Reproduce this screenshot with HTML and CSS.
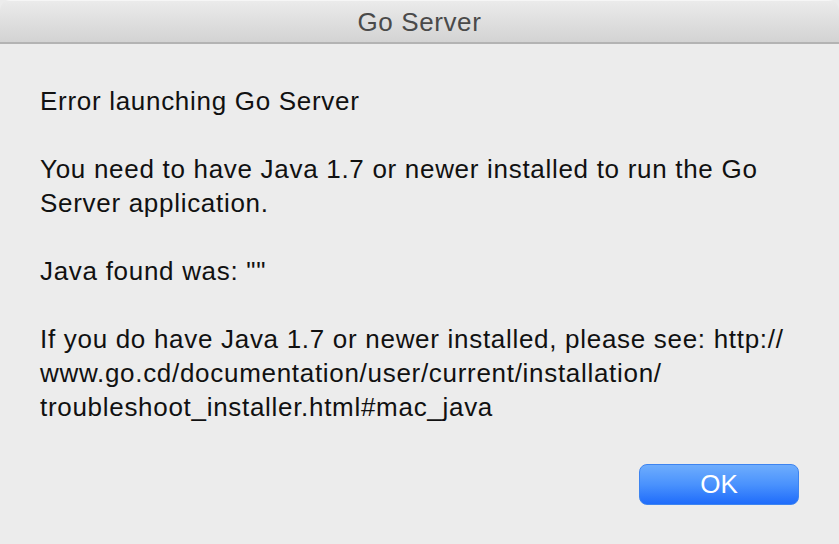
FILE: index.html
```html
<!DOCTYPE html>
<html lang="en">
<head>
  <meta charset="UTF-8" />
  <title>Go Server</title>
  <link rel="stylesheet" href="styles.css">
</head>
<body>
  <div class="window">
    <div class="titlebar">Go Server</div>
    <div class="content">
      <p>Error launching Go Server</p>
      <p>You need to have Java 1.7 or newer installed to run the Go Server application.</p>
      <p>Java found was: ""</p>
      <p>If you do have Java 1.7 or newer installed, please see: http://<br>www.go.cd/documentation/user/current/installation/<br>troubleshoot_installer.html#mac_java</p>
    </div>
    <div class="actions">
      <button type="button" class="btn-ok">OK</button>
    </div>
  </div>
</body>
</html>
```

FILE: styles.css
```css
html, body {
  margin: 0;
  padding: 0;
  background: #ececec;
}
body {
  font-family: "Liberation Sans", Arial, sans-serif;
}
.window {
  width: 839px;
  height: 544px;
  background: #ececec;
  border-radius: 10px 10px 0 0;
  overflow: hidden;
  display: flex;
  flex-direction: column;
  box-sizing: border-box;
}
.titlebar {
  height: 44px;
  line-height: 42px;
  text-align: center;
  font-size: 26px;
  letter-spacing: 0.6px;
  color: #4a4a4a;
  background: linear-gradient(#ebebeb, #d3d3d3);
  border-top: 1px solid #f6f6f6;
  border-bottom: 2px solid #b3b3b3;
  box-sizing: border-box;
}
.content {
  padding: 40px 40px 0 40px;
  font-size: 26px;
  line-height: 34px;
  letter-spacing: 0.7px;
  color: #111;
}
.content p {
  margin: 0 0 34px 0;
}
.actions {
  display: flex;
  justify-content: flex-end;
  padding: 0 40px 0 0;
  margin-top: 6px;
}
.btn-ok {
  width: 160px;
  height: 41px;
  border: 1px solid #3d84f0;
  border-radius: 8px;
  background: linear-gradient(#6eadfd, #4a92fd 50%, #1f6cfb);
  color: #fff;
  font-family: "Liberation Sans", Arial, sans-serif;
  font-size: 26px;
  padding: 0;
  cursor: pointer;
}
```
